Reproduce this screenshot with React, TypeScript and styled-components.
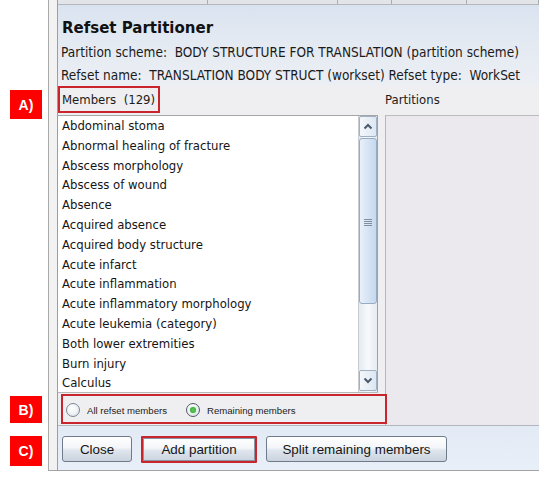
import React from "react";
import styled, { createGlobalStyle, css } from "styled-components";

const GlobalStyle = createGlobalStyle`
  html, body { margin: 0; padding: 0; background: #ffffff; }
  body { font-family: "DejaVu Sans Condensed", "Liberation Sans", Arial, sans-serif; color: #1b1b1b; }
  * { box-sizing: border-box; }
`;

const Page = styled.div`
  position: relative;
  width: 539px;
  height: 478px;
  overflow: hidden;
  background: #ffffff;
`;

const Callout = styled.div<{ $top: number; $h: number }>`
  position: absolute;
  left: 10px;
  top: ${(p) => p.$top}px;
  width: 32px;
  height: ${(p) => p.$h}px;
  background: #ff0000;
  color: #ffffff;
  font: bold 14px "Liberation Sans", Arial, sans-serif;
  display: flex;
  align-items: center;
  justify-content: center;
`;

const Window = styled.div`
  margin-left: 48px;
  height: 471px;
  border-left: 1px solid #a9a9a9;
  border-bottom: 1px solid #a3a3a3;
  background: #f2f2f2;
  padding-left: 8px;
  display: flex;
`;

const Inner = styled.div`
  flex: 1;
  min-width: 0;
  border-left: 1px solid #9d9d9d;
  display: flex;
  flex-direction: column;
  background: #efeff1;
`;

const TabStrip = styled.div`
  height: 5px;
  display: flex;
  background: #e2e4e8;
  border-bottom: 1px solid #b4b7bc;
`;

const TabSeg = styled.div<{ $w?: number }>`
  ${(p) => (p.$w ? css`width: ${p.$w}px;` : css`flex: 1;`)}
  border-right: 1px solid #a9adb3;
`;

const Header = styled.div`
  height: 81px;
  padding: 13px 0 0 3px;
  background: linear-gradient(#d9e3ef 0%, #e3e9f2 40%, #eceff4 100%);
`;

const Title = styled.div`
  font: bold 15px "DejaVu Sans", Verdana, sans-serif;
  line-height: 20px;
  color: #111111;
  margin: 0 0 3px 1px;
`;

const InfoLine = styled.div`
  font-size: 13.5px;
  line-height: 23px;
  white-space: pre;
  color: #1a1a1a;
`;

const HeadRow = styled.div`
  height: 29px;
  display: grid;
  grid-template-columns: 320px 1fr;
  column-gap: 7px;
  align-items: start;
`;

const MembersLabel = styled.div`
  width: 102px;
  height: 27px;
  border: 2px solid #c8262c;
  padding-left: 2px;
  font-size: 13px;
  line-height: 23px;
  white-space: pre;
`;

const PartitionsLabel = styled.div`
  font-size: 13px;
  line-height: 28px;
`;

const Body = styled.div`
  display: grid;
  grid-template-columns: 320px 1fr;
  grid-template-rows: 278px 32px;
  column-gap: 7px;
  border-bottom: 1px solid #b2b6bd;
`;

const ListBox = styled.div`
  grid-column: 1;
  grid-row: 1;
  display: flex;
  background: #ffffff;
  border-top: 1px solid #a6a6a6;
  border-bottom: 1px solid #b8b8b8;
`;

const Items = styled.div`
  flex: 1;
  overflow: hidden;
`;

const Item = styled.div`
  height: 19.8px;
  line-height: 19.8px;
  padding-left: 4px;
  font-size: 13px;
  white-space: nowrap;
  color: #151515;
`;

const Scrollbar = styled.div`
  width: 20px;
  display: flex;
  flex-direction: column;
  border-left: 1px solid #c9cdd2;
  border-right: 1px solid #9ea3a9;
  background: linear-gradient(to right, #e4eaf2, #f7f9fc 50%, #e6ecf3);
`;

const ScrollButton = styled.div`
  height: 21px;
  margin: 0 0 1px 0;
  border: 1px solid #a0b0c4;
  border-radius: 2px;
  background: linear-gradient(to right, #f4f7fb, #dde7f2);
  display: flex;
  align-items: center;
  justify-content: center;
`;

const Track = styled.div`
  flex: 1;
  display: flex;
  flex-direction: column;
`;

const Thumb = styled.div`
  height: 166px;
  border: 1px solid #97abc3;
  border-radius: 3px;
  background: linear-gradient(to right, #e9f0f9, #d6e4f4 50%, #c6d9ef);
  display: flex;
  align-items: center;
  justify-content: center;
  padding-top: 3px;
`;

const Grip = styled.div`
  width: 8px;
  height: 8px;
  background: repeating-linear-gradient(#6c7a8c 0 1px, transparent 1px 2px);
  opacity: 0.8;
`;

const PartitionsPanel = styled.div`
  grid-column: 2;
  grid-row: 1 / span 2;
  background: #ebe9ed;
  border-left: 1px solid #b7b7bb;
  border-top: 1px solid #bcbcbf;
`;

const RadioRow = styled.div`
  grid-column: 1;
  grid-row: 2;
  position: relative;
  z-index: 1;
  width: 326px;
  height: 30px;
  margin: 1px 0 0 3px;
  border: 2px solid #c8262c;
  padding-left: 3px;
  display: flex;
  align-items: center;
  font: 9.6px "Liberation Sans", Arial, sans-serif;
  color: #222222;
`;

const RadioOption = styled.label`
  display: flex;
  align-items: center;
  gap: 7px;
  margin-right: 19px;
  margin-top: 2px;
`;

const RadioCircle = styled.span<{ $on?: boolean }>`
  width: 14px;
  height: 14px;
  border-radius: 50%;
  border: 1px solid ${(p) => (p.$on ? "#4f5a66" : "#7c8896")};
  background: radial-gradient(circle at 40% 35%, #ffffff 0%, #f1f3f6 50%, #d3d9e1 100%);
  display: flex;
  align-items: center;
  justify-content: center;
  &::after {
    content: "";
    display: ${(p) => (p.$on ? "block" : "none")};
    width: 6px;
    height: 6px;
    border-radius: 50%;
    background: radial-gradient(circle, #5fd05f 0%, #2a9a2a 100%);
    box-shadow: 0 0 2px #9be39b;
  }
`;

const ButtonBar = styled.div`
  flex: 1;
  display: flex;
  align-items: flex-start;
  gap: 9px;
  padding: 10px 0 0 4px;
  background: linear-gradient(#e2eaf5, #e9eff8);
`;

const Button = styled.button<{ $w: number; $highlight?: boolean }>`
  width: ${(p) => p.$w}px;
  height: ${(p) => (p.$highlight ? 27 : 26)}px;
  padding: 0;
  font: 13.4px "Liberation Sans", Arial, sans-serif;
  color: #151515;
  border-radius: 3px;
  border: 1px solid #6f7b8b;
  background: linear-gradient(#ffffff 0%, #f3f5f8 45%, #dfe5ed 55%, #cad3df 100%);
  ${(p) =>
    p.$highlight &&
    css`
      border: 2px solid #c8262c;
      border-radius: 1px;
      box-shadow: inset 0 0 0 1px #8a95a3;
    `}
`;

const ChevronUp = () => (
  <svg width="10" height="7" viewBox="0 0 10 7">
    <path d="M1.5 5.5 L5 2 L8.5 5.5" fill="none" stroke="#4b5a6c" strokeWidth="2" />
  </svg>
);

const ChevronDown = () => (
  <svg width="10" height="7" viewBox="0 0 10 7">
    <path d="M1.5 1.5 L5 5 L8.5 1.5" fill="none" stroke="#4b5a6c" strokeWidth="2" />
  </svg>
);

const members = [
  "Abdominal stoma",
  "Abnormal healing of fracture",
  "Abscess morphology",
  "Abscess of wound",
  "Absence",
  "Acquired absence",
  "Acquired body structure",
  "Acute infarct",
  "Acute inflammation",
  "Acute inflammatory morphology",
  "Acute leukemia (category)",
  "Both lower extremities",
  "Burn injury",
  "Calculus",
];

export default function App() {
  return (
    <Page>
      <GlobalStyle />
      <Window>
        <Inner>
          <TabStrip>
            <TabSeg $w={150} />
            <TabSeg $w={130} />
            <TabSeg $w={54} />
            <TabSeg $w={75} />
            <TabSeg />
          </TabStrip>
          <Header>
            <Title>Refset Partitioner</Title>
            <InfoLine>{"Partition scheme:  BODY STRUCTURE FOR TRANSLATION (partition scheme)"}</InfoLine>
            <InfoLine>{"Refset name:  TRANSLATION BODY STRUCT (workset) Refset type:  WorkSet"}</InfoLine>
          </Header>
          <HeadRow>
            <MembersLabel>{"Members  (129)"}</MembersLabel>
            <PartitionsLabel>Partitions</PartitionsLabel>
          </HeadRow>
          <Body>
            <ListBox>
              <Items>
                {members.map((m) => (
                  <Item key={m}>{m}</Item>
                ))}
              </Items>
              <Scrollbar>
                <ScrollButton>
                  <ChevronUp />
                </ScrollButton>
                <Track>
                  <Thumb>
                    <Grip />
                  </Thumb>
                </Track>
                <ScrollButton>
                  <ChevronDown />
                </ScrollButton>
              </Scrollbar>
            </ListBox>
            <PartitionsPanel />
            <RadioRow>
              <RadioOption>
                <RadioCircle />
                All refset members
              </RadioOption>
              <RadioOption>
                <RadioCircle $on />
                Remaining members
              </RadioOption>
            </RadioRow>
          </Body>
          <ButtonBar>
            <Button $w={70}>Close</Button>
            <Button $w={116} $highlight>
              Add partition
            </Button>
            <Button $w={181}>Split remaining members</Button>
          </ButtonBar>
        </Inner>
      </Window>
      <Callout $top={90} $h={29}>A)</Callout>
      <Callout $top={396} $h={27}>B)</Callout>
      <Callout $top={436} $h={30}>C)</Callout>
    </Page>
  );
}
